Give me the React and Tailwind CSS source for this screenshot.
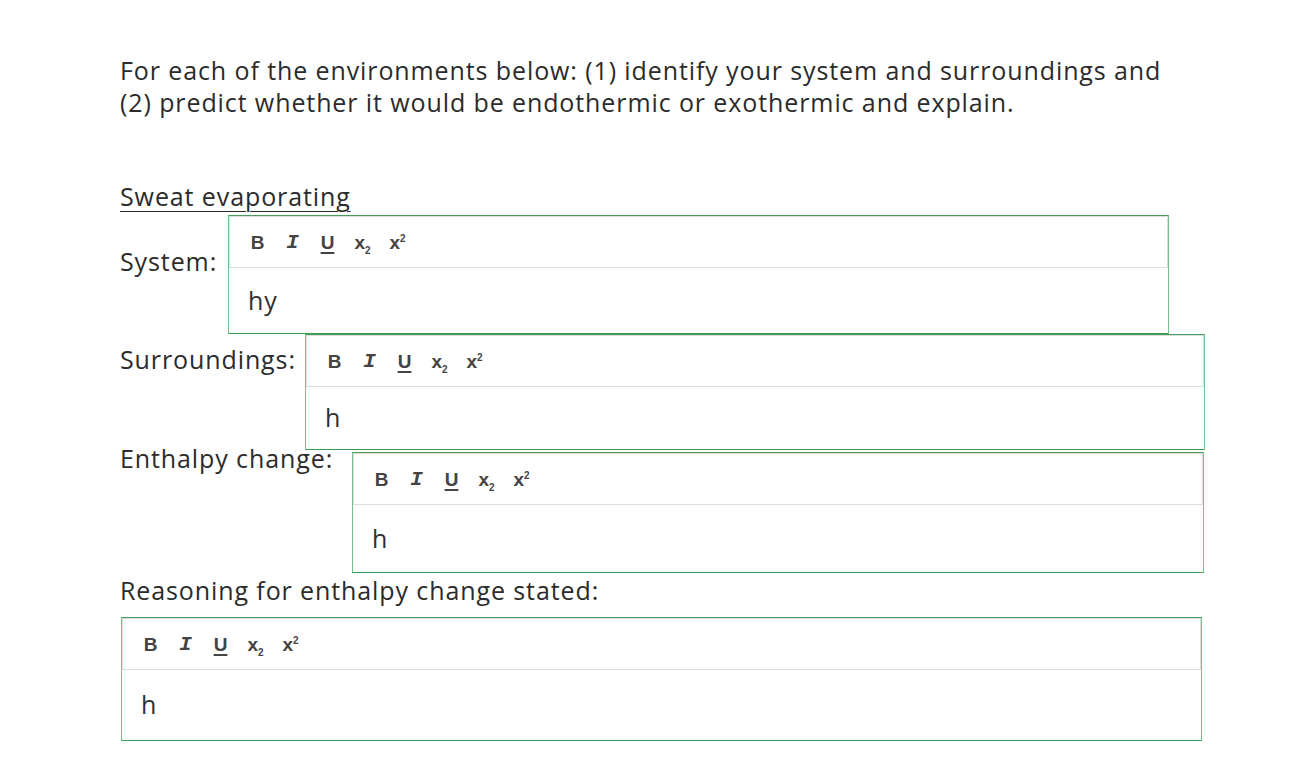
import React from "react";

const font = { fontFamily: "'Open Sans', Lato, sans-serif" };

function Toolbar() {
  return (
    <div className="flex h-[52px] items-center border border-[#dcdcdc] pl-[10px] text-[#444] font-['Liberation_Sans',sans-serif] font-bold leading-none tracking-normal">
      <span className="inline-block w-[35px] text-center text-[19px]">B</span>
      <span className="inline-block w-[35px] text-center font-['Liberation_Mono',monospace] text-[21px] italic">I</span>
      <span className="inline-block w-[35px] text-center text-[19px] underline decoration-2 underline-offset-[3px]">U</span>
      <span className="inline-block w-[35px] text-center text-[19px]">
        x<span className="relative top-[5px] text-[10px]">2</span>
      </span>
      <span className="inline-block w-[35px] text-center text-[19px]">
        x<span className="relative -top-[7px] text-[10px]">2</span>
      </span>
    </div>
  );
}

function Editor({ className, contentH, text }) {
  return (
    <div className={`shrink-0 border border-[#72c38a] border-t-[#449f5a] border-b-[#3b9b52] bg-white ${className}`}>
      <Toolbar />
      <div className={`flex items-center pl-[19px] text-[25px] text-[#2f2f2f] ${contentH}`} style={font}>
        {text}
      </div>
    </div>
  );
}

export default function App() {
  return (
    <div className="min-h-[773px] bg-white pl-[120px] pt-[54px] text-[#2b2b2b] tracking-[0.9px]" style={font}>
      <p className="text-[25px] leading-[32px]">
        For each of the environments below: (1) identify your system and surroundings and
        <br />
        (2) predict whether it would be endothermic or exothermic and explain.
      </p>

      <p className="mt-[62px] text-[25px] leading-[32px] underline decoration-1 underline-offset-[5px]">
        Sweat evaporating
      </p>

      <div className="mt-[3px] flex items-start">
        <span className="mt-[30px] w-[108px] shrink-0 text-[25px] leading-[32px]">System:</span>
        <Editor className="w-[941px]" contentH="h-[65px]" text="hy" />
      </div>

      <div className="flex items-start">
        <span className="mt-[9px] w-[185px] shrink-0 text-[25px] leading-[32px]">Surroundings:</span>
        <Editor className="w-[900px]" contentH="h-[62px]" text="h" />
      </div>

      <div className="mt-[2px] flex items-start">
        <span className="-mt-[10px] w-[232px] shrink-0 whitespace-nowrap text-[25px] leading-[32px]">Enthalpy change:</span>
        <Editor className="w-[852px]" contentH="h-[67px]" text="h" />
      </div>

      <p className="mt-[1px] text-[25px] leading-[32px]">Reasoning for enthalpy change stated:</p>

      <div className="ml-[1px] mt-[11px] flex">
        <Editor className="w-[1081px]" contentH="h-[70px]" text="h" />
      </div>
    </div>
  );
}
